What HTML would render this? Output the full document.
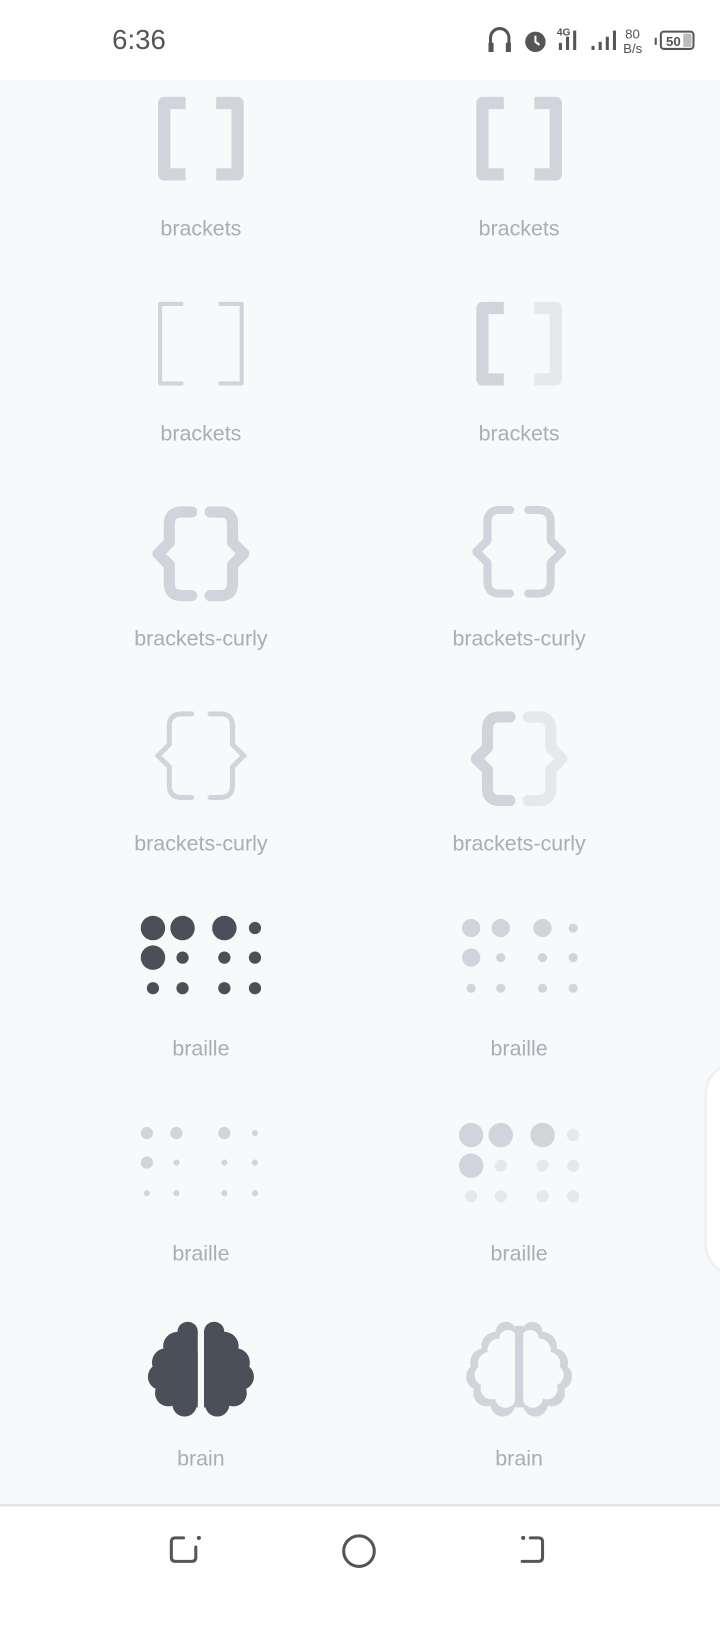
<!DOCTYPE html>
<html><head><meta charset="utf-8"><style>
body{margin:0;width:720px;height:1600px;background:#f8f9fa;position:relative;overflow:hidden;font-family:"Liberation Sans",sans-serif}
#w{position:absolute;left:0;top:0;width:706px;height:1569px;transform:scale(1.01983);transform-origin:0 0}
.sb{position:absolute;left:0;top:0;width:706px;height:78px;background:#fff}
.time{position:absolute;left:110px;top:24px;font-size:27px;color:#555}
.lbl{position:absolute;width:312px;text-align:center;font-size:21px;color:#a8aeb6}
.nav{position:absolute;left:0;top:1475px;width:706px;height:125px;background:#fff;border-top:2px solid #dedede}
.card{position:absolute;left:693px;top:1043px;width:60px;height:207px;background:#fff;border-radius:30px;box-shadow:0 0 4px rgba(0,0,0,.15)}
</style></head><body><div id="w">
<div class="sb"><div class="time">6:36</div>
<svg style="position:absolute;left:470px;top:20px" width="230" height="40" viewBox="0 0 230 40">
<g fill="none" stroke="#555" stroke-width="3"><path d="M11 28V17a9 9 0 0 1 18 0v11"/></g>
<rect x="9" y="22" width="5" height="9" fill="#555"/><rect x="26" y="22" width="5" height="9" fill="#555"/>
<circle cx="55" cy="21" r="10" fill="#555"/><path d="M55 15v6l4 3" stroke="#fff" stroke-width="2" fill="none"/>
<text x="76" y="15" font-size="10" font-weight="bold" fill="#555">4G</text>
<g fill="#555"><rect x="78" y="22" width="3" height="7"/><rect x="85" y="16" width="3" height="13"/><rect x="92" y="10" width="3" height="19"/>
<rect x="110" y="25" width="3" height="4"/><rect x="117" y="21" width="3" height="8"/><rect x="124" y="16" width="3" height="13"/><rect x="131" y="10" width="3" height="19"/></g>
<text x="143" y="18" font-size="13" fill="#555">80</text><text x="141" y="32" font-size="13" fill="#555">B/s</text>
<rect x="172" y="17" width="2" height="7" fill="#555"/>
<rect x="178" y="11" width="32" height="17" rx="3" fill="none" stroke="#555" stroke-width="2"/>
<rect x="200" y="13" width="8" height="13" fill="#bbb"/>
<text x="183" y="25" font-size="13" font-weight="bold" fill="#555">50</text>
</svg></div>

<svg style="position:absolute;left:0;top:0" width="706" height="1475">
<defs>
<path id="bl" d="M27 6H6V76H27" fill="none" stroke-width="12" stroke-linecap="butt" stroke-linejoin="round"/>
<path id="cl" d="M28 0h-10q-12 0-12 12v18l-11 11 11 11v18q0 12 12 12h10" />
</defs>
<g stroke="#d1d5db"><use href="#bl" x="155" y="95"/><use href="#bl" transform="translate(239 95) scale(-1 1)"/>
<use href="#bl" x="467" y="95"/><use href="#bl" transform="translate(551 95) scale(-1 1)"/></g>
<g fill="none" stroke="#d1d5db" stroke-width="4" stroke-linecap="round" stroke-linejoin="round"><path d="M178 298h-21v78h21M216 298h21v78h-21"/></g>
<use href="#bl" x="467" y="296" stroke="#d1d5db"/><use href="#bl" transform="translate(551 296) scale(-1 1)" stroke="#e6e8eb"/>
<g fill="none" stroke="#d1d5db" stroke-width="11" stroke-linejoin="round" stroke-linecap="round">
<use href="#cl" transform="translate(160 502)"/><use href="#cl" transform="translate(234 502) scale(-1 1)"/>
</g>
<g fill="none" stroke="#d1d5db" stroke-width="8" stroke-linejoin="round" stroke-linecap="round">
<use href="#cl" transform="translate(472 500)"/><use href="#cl" transform="translate(546 500) scale(-1 1)"/>
</g>
<g fill="none" stroke="#d1d5db" stroke-width="5" stroke-linecap="round">
<use href="#cl" transform="translate(160 700)"/><use href="#cl" transform="translate(234 700) scale(-1 1)"/>
</g>
<g fill="none" stroke-width="11" stroke-linejoin="round" stroke-linecap="round">
<use href="#cl" transform="translate(472 703)" stroke="#d1d5db"/><use href="#cl" transform="translate(546 703) scale(-1 1)" stroke="#e6e8eb"/>
</g>
<g fill="#4b5058"><circle cx="150" cy="910" r="12"/><circle cx="179" cy="910" r="12"/><circle cx="220" cy="910" r="12"/><circle cx="250" cy="910" r="6"/>
<circle cx="150" cy="939" r="12"/><circle cx="179" cy="939" r="6"/><circle cx="220" cy="939" r="6"/><circle cx="250" cy="939" r="6"/>
<circle cx="150" cy="969" r="6"/><circle cx="179" cy="969" r="6"/><circle cx="220" cy="969" r="6"/><circle cx="250" cy="969" r="6"/></g>
<g fill="#d1d5db"><circle cx="462" cy="910" r="9"/><circle cx="491" cy="910" r="9"/><circle cx="532" cy="910" r="9"/><circle cx="562" cy="910" r="4.5"/>
<circle cx="462" cy="939" r="9"/><circle cx="491" cy="939" r="4.5"/><circle cx="532" cy="939" r="4.5"/><circle cx="562" cy="939" r="4.5"/>
<circle cx="462" cy="969" r="4.5"/><circle cx="491" cy="969" r="4.5"/><circle cx="532" cy="969" r="4.5"/><circle cx="562" cy="969" r="4.5"/></g>
<g fill="#d1d5db"><circle cx="144" cy="1111" r="6"/><circle cx="173" cy="1111" r="6"/><circle cx="220" cy="1111" r="6"/><circle cx="250" cy="1111" r="3"/>
<circle cx="144" cy="1140" r="6"/><circle cx="173" cy="1140" r="3"/><circle cx="220" cy="1140" r="3"/><circle cx="250" cy="1140" r="3"/>
<circle cx="144" cy="1170" r="3"/><circle cx="173" cy="1170" r="3"/><circle cx="220" cy="1170" r="3"/><circle cx="250" cy="1170" r="3"/></g>
<g fill="#d1d5db"><circle cx="462" cy="1113" r="12"/><circle cx="491" cy="1113" r="12"/><circle cx="532" cy="1113" r="12"/><circle cx="462" cy="1143" r="12"/></g>
<g fill="#e6e8eb"><circle cx="562" cy="1113" r="6"/><circle cx="491" cy="1143" r="6"/><circle cx="532" cy="1143" r="6"/><circle cx="562" cy="1143" r="6"/>
<circle cx="462" cy="1173" r="6"/><circle cx="491" cy="1173" r="6"/><circle cx="532" cy="1173" r="6"/><circle cx="562" cy="1173" r="6"/></g>
<defs><clipPath id="lc"><rect x="100" y="1280" width="94" height="120"/></clipPath>
<g id="half"><circle cx="184" cy="1306" r="10"/><rect x="174" y="1306" width="20" height="74"/><circle cx="174" cy="1320" r="14"/><circle cx="163" cy="1336" r="14"/><circle cx="158" cy="1350" r="13"/><circle cx="165" cy="1366" r="13"/><circle cx="181" cy="1377" r="12"/><rect x="160" y="1325" width="34" height="50"/></g>
</defs>
<g fill="#4b5058"><use href="#half" clip-path="url(#lc)"/><use href="#half" transform="translate(394 0) scale(-1 1)" clip-path="url(#lc)"/></g>
<g transform="translate(312 0)">
<g fill="#d1d5db"><use href="#half"/><use href="#half" transform="translate(394 0) scale(-1 1)"/></g>
<g fill="#f8f9fa" transform="translate(197 1341) scale(0.84 0.82) translate(-197 -1341)"><use href="#half" clip-path="url(#lc)"/><use href="#half" transform="translate(394 0) scale(-1 1)" clip-path="url(#lc)"/></g>
<rect x="193" y="1300" width="8" height="80" fill="#d1d5db"/>
</g>
</svg>

<div class="lbl" style="left:41px;top:213px">brackets</div><div class="lbl" style="left:353px;top:213px">brackets</div>
<div class="lbl" style="left:41px;top:414px">brackets</div><div class="lbl" style="left:353px;top:414px">brackets</div>
<div class="lbl" style="left:41px;top:615px">brackets-curly</div><div class="lbl" style="left:353px;top:615px">brackets-curly</div>
<div class="lbl" style="left:41px;top:816px">brackets-curly</div><div class="lbl" style="left:353px;top:816px">brackets-curly</div>
<div class="lbl" style="left:41px;top:1017px">braille</div><div class="lbl" style="left:353px;top:1017px">braille</div>
<div class="lbl" style="left:41px;top:1218px">braille</div><div class="lbl" style="left:353px;top:1218px">braille</div>
<div class="lbl" style="left:41px;top:1419px">brain</div><div class="lbl" style="left:353px;top:1419px">brain</div>
<div class="card"></div>
<div class="nav"><svg width="706" height="125" style="position:absolute;left:0;top:-2px">
<g fill="none" stroke="#555" stroke-width="3" stroke-linecap="round">
<path d="M180 33h-8q-4 0-4 4v15q0 4 4 4h16q4 0 4-4v-10"/>
<circle cx="352" cy="46" r="15"/>
<path d="M520 33h8q4 0 4 4v15q0 4-4 4h-16"/></g>
<circle cx="195" cy="33" r="2" fill="#555"/><circle cx="513" cy="33" r="2" fill="#555"/>
</svg></div>
</div></body></html>
